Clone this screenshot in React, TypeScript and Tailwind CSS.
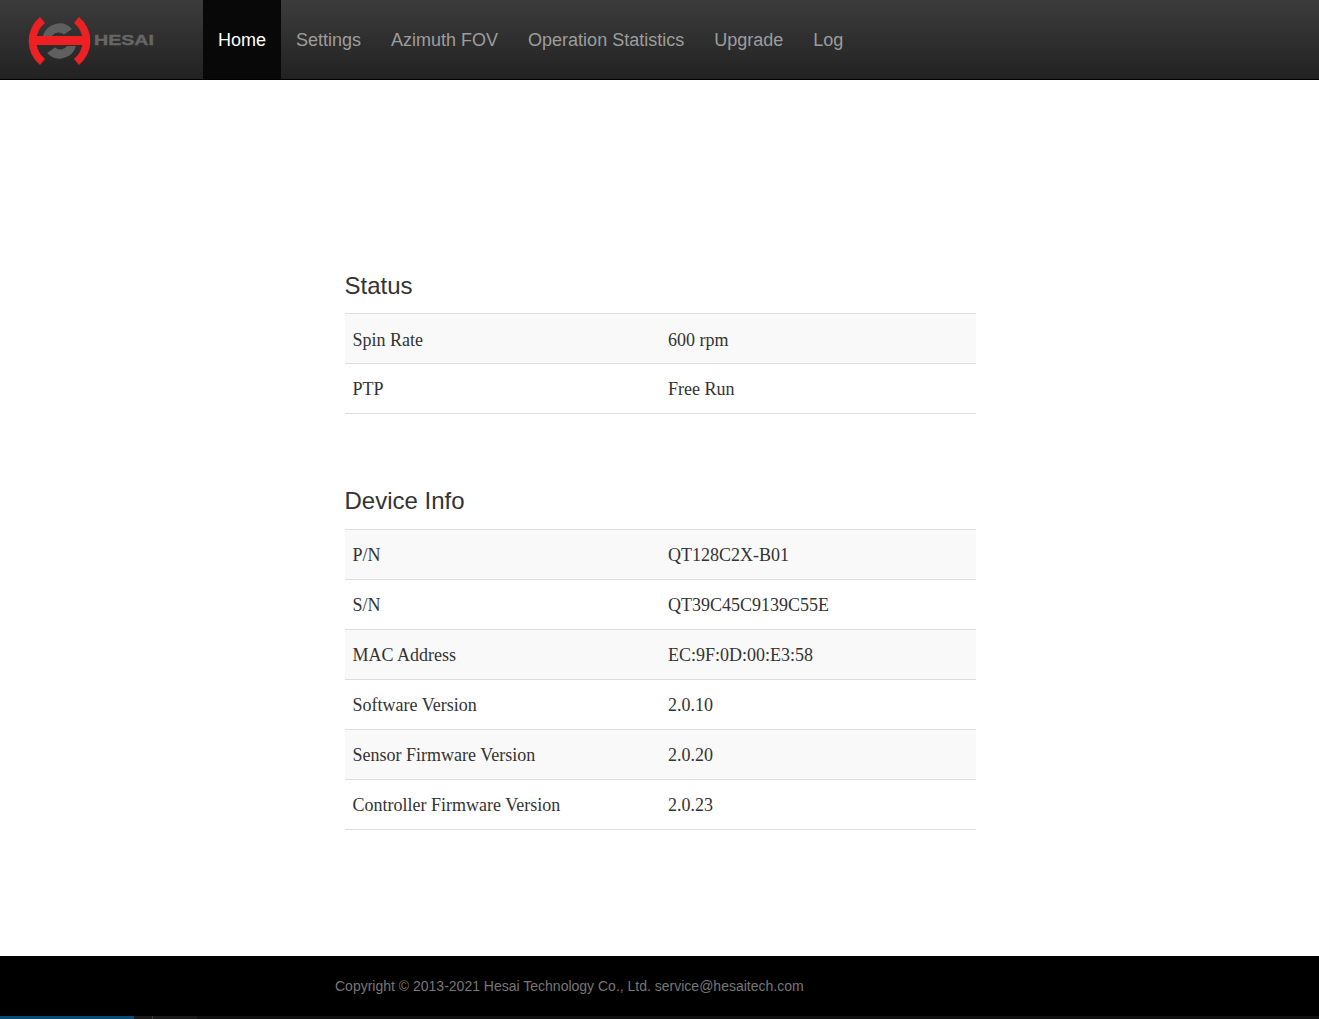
const status = [
  ["Spin Rate", "600 rpm"],
  ["PTP", "Free Run"],
];
const device = [
  ["P/N", "QT128C2X-B01"],
  ["S/N", "QT39C45C9139C55E"],
  ["MAC Address", "EC:9F:0D:00:E3:58"],
  ["Software Version", "2.0.10"],
  ["Sensor Firmware Version", "2.0.20"],
  ["Controller Firmware Version", "2.0.23"],
];
const navs = ["Settings", "Azimuth FOV", "Operation Statistics", "Upgrade", "Log"];

function Logo() {
  return (
    <svg width="128" height="54" viewBox="28 13 128 54" className="block">
      <path d="M43 36 A17 17 0 0 1 72 29 L64 34.5 A8 8 0 0 0 52 36 Z" fill="#5f5f5f" />
      <path d="M76 46 A17 17 0 0 1 47 53 L55 47.5 A8 8 0 0 0 67 46 Z" fill="#5f5f5f" />
      <path d="M40 17 L45 23 A23 23 0 0 0 45 59 L40 65 A31 31 0 0 1 40 17 Z" fill="#ed2024" />
      <path d="M79 17 L74 23 A23 23 0 0 1 74 59 L79 65 A31 31 0 0 0 79 17 Z" fill="#ed2024" />
      <rect x="29" y="36" width="61" height="9" fill="#ed2024" />
      <text x="94" y="44.8" fill="#666666" stroke="#666666" strokeWidth="0.4" fontFamily="'Liberation Sans', sans-serif" fontWeight="700" fontSize="15.5" textLength="60" lengthAdjust="spacingAndGlyphs">HESAI</text>
    </svg>
  );
}

function InfoTable({ rows, nudge }: { rows: string[][]; nudge?: boolean }) {
  return (
    <div className="border-t border-[#dddddd]">
      {rows.map(([k, v], i) => (
        <div
          key={k}
          className={`flex h-[50px] items-center border-b border-[#dddddd] px-2 ${i % 2 === 0 ? "bg-[#f9f9f9]" : "bg-white"} ${nudge && i === 0 ? "pt-[2px]" : ""}`}
        >
          <div className="w-[315.5px] shrink-0">{k}</div>
          <div>{v}</div>
        </div>
      ))}
    </div>
  );
}

export default function App() {
  return (
    <div className="flex h-[1019px] flex-col overflow-hidden bg-white font-['Liberation_Serif',serif] text-lg text-[#333333]">
      <nav className="flex h-20 shrink-0 border-b border-black bg-gradient-to-b from-[#3c3c3c] to-[#222222] font-['Liberation_Sans',sans-serif]">
        <div className="flex w-[203px] shrink-0 items-center pl-[28px]">
          <Logo />
        </div>
        <a className="flex items-center bg-[#080808] px-[15px] text-white">Home</a>
        {navs.map((n) => (
          <a key={n} className="flex items-center px-[15px] text-[#9d9d9d]">{n}</a>
        ))}
      </nav>
      <main className="ml-[344.5px] w-[631px] flex-1 pt-[191px]">
        <h3 className="mb-[12px] font-['Liberation_Sans',sans-serif] text-2xl leading-[30px] text-[#333333]">Status</h3>
        <InfoTable rows={status} nudge />
        <h3 className="mt-[72px] mb-[13px] font-['Liberation_Sans',sans-serif] text-2xl leading-[30px] text-[#333333]">Device Info</h3>
        <InfoTable rows={device} />
      </main>
      <footer className="relative flex h-[63px] shrink-0 items-start bg-black pt-[20px] pl-[335px] font-['Liberation_Sans',sans-serif] text-sm leading-5 text-[#777777]">
        Copyright © 2013-2021 Hesai Technology Co., Ltd. service@hesaitech.com
        <div className="absolute right-0 bottom-0 left-0 flex h-[3px]">
          <div className="w-[134px] bg-[#064a75]" />
          <div className="w-[18px] bg-[#1a1a1a]" />
          <div className="w-px bg-[#3a3a3a]" />
          <div className="w-[44px] bg-[#1a1a1a]" />
          <div className="flex-1 bg-[#111111]" />
        </div>
      </footer>
    </div>
  );
}
